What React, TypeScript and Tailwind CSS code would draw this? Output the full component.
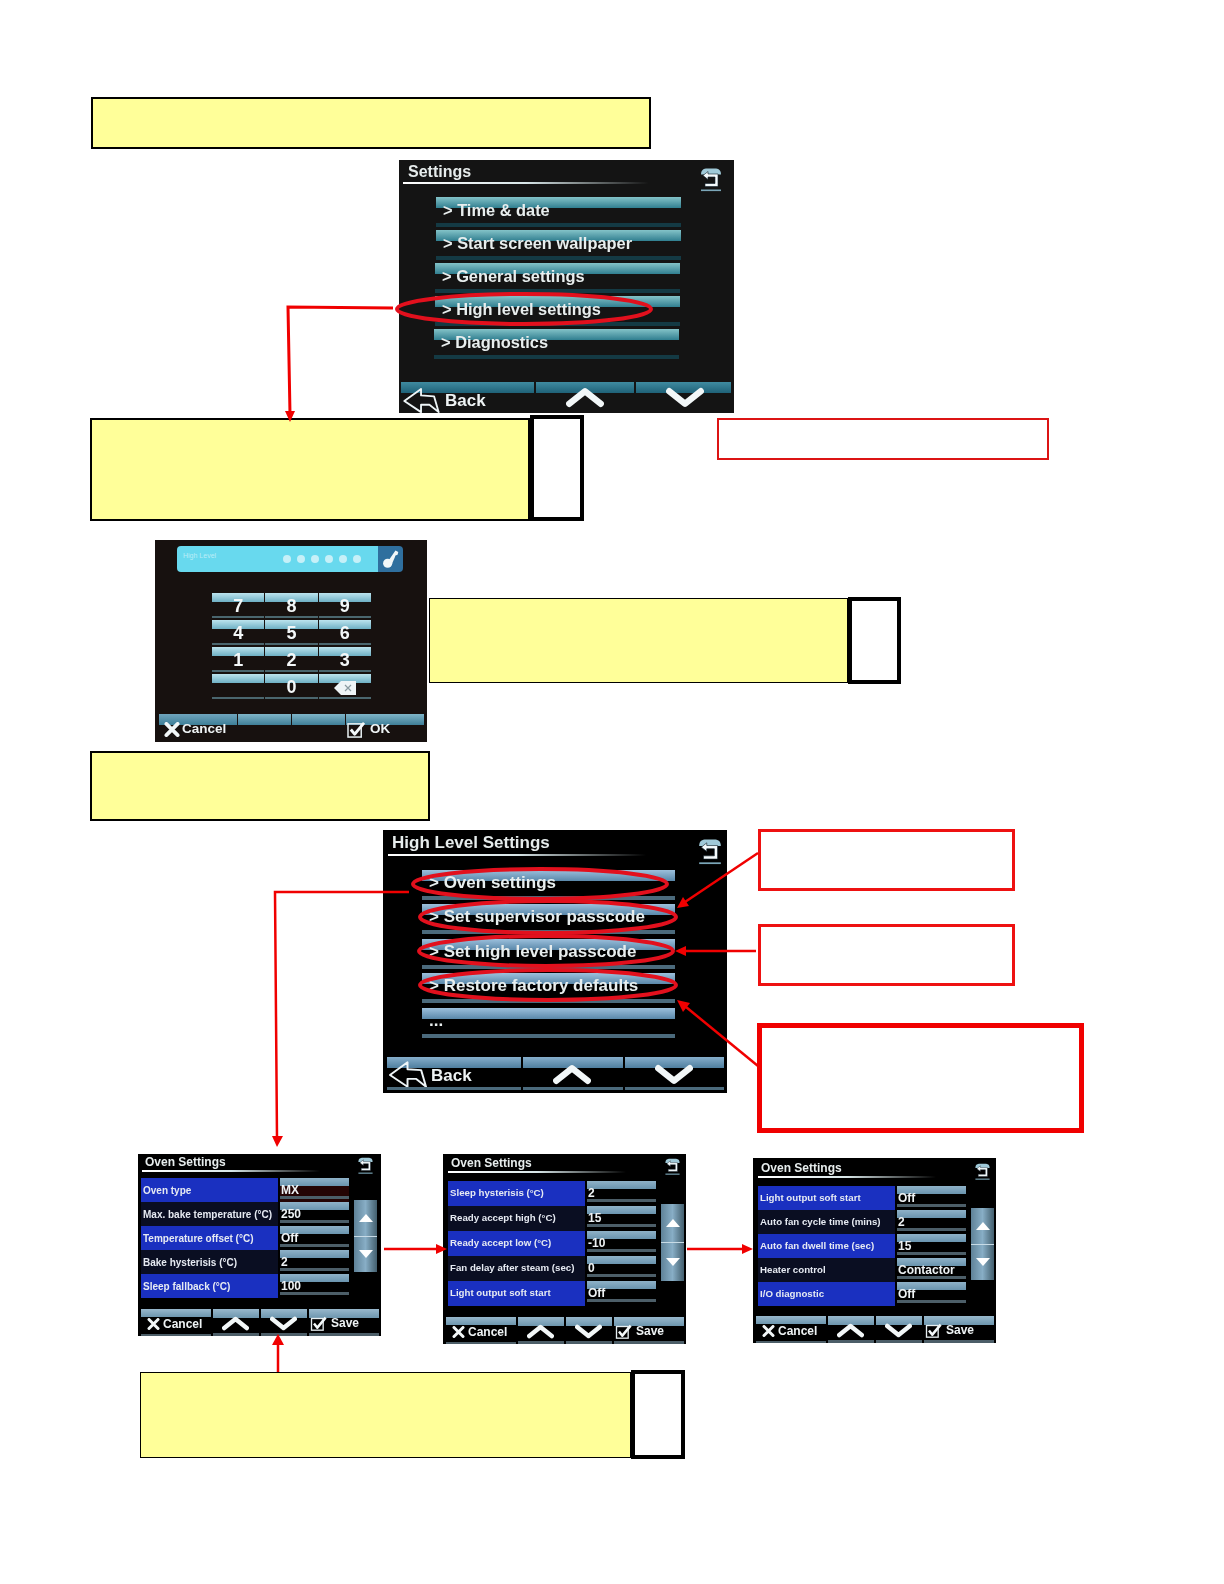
import type { ReactNode } from "react";

const RED = "#f00000";
const RING = "#e2101d";

function ReturnIcon({ className = "" }: { className?: string }) {
  return (
    <svg viewBox="0 0 24 24" className={className}>
      <path d="M2 7 C2 2 5 1 8 1 H16 C19 1 22 2 22 7 Z" fill="#9fc9d8" />
      <path d="M9 4 L4 8 L9 12 V9.5 H16 V16 H6 V19 H19 V6.5 H9 Z" fill="#f4fafc" stroke="#10202a" strokeWidth="0.6" />
      <rect x="2" y="22" width="20" height="1.6" fill="#7ba6b8" />
    </svg>
  );
}

function BackArrow({ className = "" }: { className?: string }) {
  return (
    <svg viewBox="-1 -1 39 28" className={className}>
      <path
        d="M0 13 L18 0 V7 L32 8 L37 25 L27 17 H18 V25 Z"
        fill="none"
        stroke="#eef5f7"
        strokeWidth="2"
        strokeLinejoin="round"
      />
    </svg>
  );
}

function Chevron({ down = false, className = "" }: { down?: boolean; className?: string }) {
  return (
    <svg viewBox="0 0 36 20" className={className}>
      <path
        d={down ? "M3 4 L18 16 L33 4" : "M3 16 L18 4 L33 16"}
        fill="none"
        stroke="#f2f7f8"
        strokeWidth="6"
        strokeLinecap="round"
        strokeLinejoin="round"
      />
    </svg>
  );
}

function CancelX({ className = "" }: { className?: string }) {
  return (
    <svg viewBox="0 0 16 16" className={className}>
      <path d="M2 2 L14 14 M14 2 L2 14" stroke="#f2f7f8" strokeWidth="4" strokeLinecap="round" />
    </svg>
  );
}

function CheckBox({ className = "" }: { className?: string }) {
  return (
    <svg viewBox="0 0 20 18" className={className}>
      <rect x="1" y="3" width="14" height="14" fill="none" stroke="#e6eef0" strokeWidth="1.6" />
      <path d="M4 9 L8 14 L18 2" fill="none" stroke="#f4f9fa" strokeWidth="3" strokeLinejoin="round" />
    </svg>
  );
}

function KeyIcon({ className = "" }: { className?: string }) {
  return (
    <svg viewBox="0 0 24 28" className={className}>
      <circle cx="8" cy="20" r="6.5" fill="#f2f7f8" />
      <path d="M10 15 L19 2 L23 4 L22 8 L19 9 L18 12 L14 21 Z" fill="#f2f7f8" />
    </svg>
  );
}

function Screen({ className, children }: { className: string; children: ReactNode }) {
  return (
    <div className={`shrink-0 overflow-hidden ${className}`}>
      <div className="flex h-full flex-col blur-[0.4px]">{children}</div>
    </div>
  );
}

function TitleRow({
  title,
  titleClass,
  lineClass,
  iconClass,
  boxClass,
}: {
  title: string;
  titleClass: string;
  lineClass: string;
  iconClass: string;
  boxClass: string;
}) {
  return (
    <div className={`flex shrink-0 items-start justify-between ${boxClass}`}>
      <div>
        <div className={`font-bold text-[#e6ecec] ${titleClass}`}>{title}</div>
        <div className={`h-[2px] bg-linear-to-r from-white via-[#d8e6e8] to-transparent ${lineClass}`} />
      </div>
      <ReturnIcon className={iconClass} />
    </div>
  );
}

type BarCellProps = { widthClass: string; strip: string; foot?: string; children: ReactNode };

function BarCell({ widthClass, strip, foot, children }: BarCellProps) {
  return (
    <div className={`flex shrink-0 flex-col ${widthClass}`}>
      <div className={`h-[11px] bg-linear-to-b ${strip}`} />
      <div className="-mt-[6px] flex h-[24px] items-center font-bold text-[#eef3f4]">{children}</div>
      {foot && <div className={`mt-[1px] h-[3px] ${foot}`} />}
    </div>
  );
}

function MenuRow({
  text,
  strip,
  foot,
  textClass,
  rowClass,
}: {
  text: string;
  strip: string;
  foot: string;
  textClass: string;
  rowClass: string;
}) {
  return (
    <div className={`flex shrink-0 flex-col ${rowClass}`}>
      <div className={`h-[11px] bg-linear-to-b ${strip}`} />
      <div className={`-mt-[8px] h-[20px] pl-[7px] leading-[20px] font-bold whitespace-nowrap text-[#e8eeee] ${textClass}`}>
        {text}
      </div>
      <div className={`mt-[3px] h-[4px] ${foot}`} />
    </div>
  );
}

function SettingsScreen() {
  const strip = "from-[#83c3c8] to-[#2f7f90]";
  const foot = "bg-[#143a44]";
  const rows = ["> Time & date", "> Start screen wallpaper", "> General settings", "> High level settings", "> Diagnostics"];
  const cell = "from-[#3f8ba0] to-[#1f6278]";
  return (
    <Screen className="h-[253px] w-[335px] bg-[#141414]">
      <TitleRow
        title="Settings"
        titleClass="text-[16px] leading-[20px] pl-[5px]"
        lineClass="w-[246px]"
        iconClass="mt-[5px] h-[25px] w-[24px]"
        boxClass="h-[37px] pl-[4px] pr-[11px] pt-[2px]"
      />
      {rows.map((r, i) => (
        <MenuRow
          key={r}
          text={r}
          strip={strip}
          foot={foot}
          textClass="text-[16.4px]"
          rowClass={`h-[33px] w-[245px] ${i < 2 ? "ml-[37px]" : i < 4 ? "ml-[36px]" : "ml-[35px]"}`}
        />
      ))}
      <div className="mt-auto flex h-[31px] gap-[2px] pl-[2px]">
        <BarCell widthClass="w-[133px]" strip={cell}>
          <BackArrow className="mt-[3px] ml-[2px] h-[26px] w-[37px]" />
          <span className="mt-[4px] ml-[5px] text-[17px]">Back</span>
        </BarCell>
        <BarCell widthClass="w-[98px] justify-start" strip={cell}>
          <Chevron className="-mt-[3px] ml-[30px] h-[21px] w-[38px]" />
        </BarCell>
        <BarCell widthClass="w-[95px]" strip={cell}>
          <Chevron down className="-mt-[4px] ml-[30px] h-[21px] w-[38px]" />
        </BarCell>
      </div>
    </Screen>
  );
}

function HighLevelScreen() {
  const strip = "from-[#9cc0dc] to-[#5a88aa]";
  const foot = "bg-[#4b6a7c]";
  const rows = ["> Oven settings", "> Set supervisor passcode", "> Set high level passcode", "> Restore factory defaults", "..."];
  const cell = "from-[#86aecb] to-[#4f7f9f]";
  return (
    <Screen className="h-[263px] w-[344px] bg-black">
      <TitleRow
        title="High Level Settings"
        titleClass="text-[17px] leading-[22px] pl-[4px]"
        lineClass="w-[258px]"
        iconClass="mt-[6px] h-[27px] w-[26px]"
        boxClass="h-[40px] pl-[5px] pr-[4px] pt-[2px]"
      />
      {rows.map((r) => (
        <MenuRow
          key={r}
          text={r}
          strip={strip}
          foot={foot}
          textClass="text-[17px]"
          rowClass="ml-[39px] h-[34.4px] w-[253px]"
        />
      ))}
      <div className="mt-auto flex h-[36px] gap-[2px] pl-[4px]">
        <BarCell widthClass="w-[134px]" strip={cell} foot={foot}>
          <BackArrow className="mt-[2px] ml-[2px] h-[28px] w-[38px]" />
          <span className="mt-[4px] ml-[4px] text-[17px]">Back</span>
        </BarCell>
        <BarCell widthClass="w-[100px]" strip={cell} foot={foot}>
          <Chevron className="mt-[1px] ml-[30px] h-[21px] w-[38px]" />
        </BarCell>
        <BarCell widthClass="w-[99px]" strip={cell} foot={foot}>
          <Chevron down className="mt-[1px] ml-[30px] h-[21px] w-[38px]" />
        </BarCell>
      </div>
    </Screen>
  );
}

function KeypadScreen() {
  const keys = ["7", "8", "9", "4", "5", "6", "1", "2", "3", "", "0", "del"];
  const cell = "from-[#7fb5c8] to-[#3f7f98]";
  return (
    <Screen className="h-[202px] w-[272px] bg-[#17110f]">
      <div className="mt-[6px] ml-[22px] flex h-[26px] w-[226px] shrink-0">
        <div className="flex w-[201px] items-center justify-between rounded-l-[4px] bg-[#68d9ee] pr-[17px] pl-[6px]">
          <span className="-mt-[5px] text-[7px] text-[#b9edf7]">High Level</span>
          <div className="flex gap-[6px]">
            {[0, 1, 2, 3, 4, 5].map((d) => (
              <div key={d} className="h-[8px] w-[8px] rounded-full bg-[#c6f0f8]" />
            ))}
          </div>
        </div>
        <div className="flex w-[25px] items-center justify-center rounded-r-[4px] bg-[#2f6f9e]">
          <KeyIcon className="h-[20px] w-[17px]" />
        </div>
      </div>
      <div className="mt-[21px] ml-[57px] grid w-[159px] shrink-0 grid-cols-3 gap-x-px">
        {keys.map((k, i) => (
          <div key={i} className="flex h-[27px] flex-col">
            <div className="h-[9px] bg-linear-to-b from-[#bce4ee] to-[#6eb0c4]" />
            <div className="-mt-[4px] flex h-[17px] items-center justify-center text-[18px] font-bold text-[#f3f7f8]">
              {k === "del" ? (
                <svg viewBox="0 0 22 14" className="mt-[1px] h-[14px] w-[22px]">
                  <path d="M0 7 L7 0 H22 V14 H7 Z" fill="#eef4f6" />
                  <path d="M11 4 L17 10 M17 4 L11 10" stroke="#8a9aa0" strokeWidth="1.2" />
                </svg>
              ) : (
                k
              )}
            </div>
            <div className="mt-[1px] h-[2px] bg-[#4a666e]" />
          </div>
        ))}
      </div>
      <div className="mt-auto flex h-[28px] gap-px pl-[4px]">
        <BarCell widthClass="w-[78px]" strip="from-[#6fa5bc] to-[#3d7f98]">
          <CancelX className="-mt-[1px] ml-[5px] h-[15px] w-[16px]" />
          <span className="-mt-[2px] ml-[2px] text-[13.5px]">Cancel</span>
        </BarCell>
        <BarCell widthClass="w-[53px]" strip={cell}>
          <span />
        </BarCell>
        <BarCell widthClass="w-[53px]" strip={cell}>
          <span />
        </BarCell>
        <BarCell widthClass="w-[78px]" strip={cell}>
          <CheckBox className="-mt-[1px] ml-[1px] h-[17px] w-[19px]" />
          <span className="-mt-[2px] ml-[4px] text-[13.5px]">OK</span>
        </BarCell>
      </div>
    </Screen>
  );
}

type OvenRow = { label: string; value: string };

function OvenScreen({
  rows,
  size,
  head,
  line,
  rowH,
  rowsClass,
  scrollClass,
  labelClass,
  hot,
}: {
  rows: OvenRow[];
  size: string;
  head: string;
  line: string;
  rowH: string;
  rowsClass: string;
  scrollClass: string;
  labelClass: string;
  hot?: boolean;
}) {
  const strip = "from-[#8fb2c8] to-[#6a94ae]";
  const foot = "bg-[#4c5e68]";
  return (
    <Screen className={`bg-black ${size}`}>
      <TitleRow
        title="Oven Settings"
        titleClass="text-[12px] leading-[15px] pl-[3px]"
        lineClass={line}
        iconClass="mt-[2px] h-[17px] w-[17px]"
        boxClass={head}
      />
      <div className={`flex ${rowsClass}`}>
        <div className="w-[208px] shrink-0">
          {rows.map((r, i) => (
            <div key={r.label} className={`flex ${rowH}`}>
              <div
                className={`flex w-[137px] shrink-0 items-center pl-[2px] font-bold whitespace-nowrap text-[#e6eaf2] ${labelClass} ${
                  i % 2 === 0 ? "bg-[#1a30c0]" : "bg-[#0a0e22]"
                }`}
              >
                {r.label}
              </div>
              <div className={`ml-[2px] flex w-[69px] flex-col ${hot && i === 0 ? "bg-[#240404]" : ""}`}>
                <div className={`h-[8px] bg-linear-to-b ${strip}`} />
                <div className="-mt-[2px] h-[12px] pl-[1px] text-[12px] leading-[12px] font-bold text-[#eef2f4]">
                  {r.value}
                </div>
                <div className={`h-[3px] ${foot}`} />
              </div>
            </div>
          ))}
        </div>
        <div className={`ml-[5px] flex w-[23px] shrink-0 flex-col bg-linear-to-r from-[#5f8298] via-[#88aec6] to-[#44606f] ${scrollClass}`}>
          <div className="flex flex-1 items-center justify-center border-b border-[#c8dbe6]">
            <div className="h-0 w-0 border-x-[7px] border-b-[8px] border-x-transparent border-b-white" />
          </div>
          <div className="flex flex-1 items-center justify-center">
            <div className="h-0 w-0 border-x-[7px] border-t-[8px] border-x-transparent border-t-white" />
          </div>
        </div>
      </div>
      <div className="mt-auto flex h-[27px] gap-[2px] pl-[3px]">
        <BarCell widthClass="w-[70px]" strip="from-[#98b8cc] to-[#6d96ae]" foot={foot}>
          <CancelX className="mt-[4px] ml-[6px] h-[12px] w-[13px]" />
          <span className="mt-[4px] ml-[3px] text-[12px]">Cancel</span>
        </BarCell>
        <BarCell widthClass="w-[46px]" strip="from-[#98b8cc] to-[#6d96ae]" foot={foot}>
          <Chevron className="mt-[3px] ml-[9px] h-[15px] w-[27px]" />
        </BarCell>
        <BarCell widthClass="w-[46px]" strip="from-[#98b8cc] to-[#6d96ae]" foot={foot}>
          <Chevron down className="mt-[3px] ml-[9px] h-[15px] w-[27px]" />
        </BarCell>
        <BarCell widthClass="w-[70px]" strip="from-[#98b8cc] to-[#6d96ae]" foot={foot}>
          <CheckBox className="mt-[3px] ml-[1px] h-[15px] w-[18px]" />
          <span className="mt-[2px] ml-[3px] text-[12px]">Save</span>
        </BarCell>
      </div>
    </Screen>
  );
}

function Arrows() {
  return (
    <svg viewBox="0 0 1224 1584" className="pointer-events-none absolute inset-0 h-[1584px] w-[1224px]">
      <g fill="none" stroke={RING}>
        <ellipse cx="524" cy="309" rx="127" ry="15" strokeWidth="4" />
        <ellipse cx="540" cy="884" rx="127" ry="15" strokeWidth="4" />
        <ellipse cx="548" cy="917" rx="128" ry="16" strokeWidth="4" />
        <ellipse cx="546" cy="951" rx="127" ry="15" strokeWidth="4" />
        <ellipse cx="548" cy="985" rx="128" ry="15" strokeWidth="4" />
      </g>
      <g fill="none" stroke={RED}>
        <path d="M393 308 L288 307 L290 414" strokeWidth="3" />
        <path d="M409 892 H275 L277 1138" strokeWidth="2.5" />
        <path d="M278 1372 V1342" strokeWidth="2.5" />
        <path d="M384 1249 H438" strokeWidth="2.5" />
        <path d="M687 1249 H744" strokeWidth="2.5" />
        <path d="M758 853 L685 902" strokeWidth="2.5" />
        <path d="M756 951 H686" strokeWidth="2.5" />
        <path d="M758 1066 L686 1007" strokeWidth="2.5" />
      </g>
      <g fill={RED}>
        <polygon points="285,411 295,411 290,422" />
        <polygon points="272,1136 283,1136 277,1147" />
        <polygon points="272,1345 284,1345 278,1334" />
        <polygon points="436,1244 436,1254 447,1249" />
        <polygon points="742,1244 742,1254 753,1249" />
        <polygon points="677,908 683,897 689,906" />
        <polygon points="675,951 686,946 686,956" />
        <polygon points="677,1000 690,1003 683,1012" />
      </g>
    </svg>
  );
}

const OVEN_A: OvenRow[] = [
  { label: "Oven type", value: "MX" },
  { label: "Max. bake temperature (°C)", value: "250" },
  { label: "Temperature offset (°C)", value: "Off" },
  { label: "Bake hysterisis (°C)", value: "2" },
  { label: "Sleep fallback (°C)", value: "100" },
];

const OVEN_B: OvenRow[] = [
  { label: "Sleep hysterisis (°C)", value: "2" },
  { label: "Ready accept high (°C)", value: "15" },
  { label: "Ready accept low (°C)", value: "-10" },
  { label: "Fan delay after steam (sec)", value: "0" },
  { label: "Light output soft start", value: "Off" },
];

const OVEN_C: OvenRow[] = [
  { label: "Light output soft start", value: "Off" },
  { label: "Auto fan cycle time (mins)", value: "2" },
  { label: "Auto fan dwell time (sec)", value: "15" },
  { label: "Heater control", value: "Contactor" },
  { label: "I/O diagnostic", value: "Off" },
];

export default function App() {
  const note = "shrink-0 border-2 border-black bg-[#ffff99]";
  const thinNote = "shrink-0 border border-black bg-[#ffff99]";
  const blank = "shrink-0 border-4 border-black bg-white";
  return (
    <div className="relative flex h-[1584px] w-[1224px] flex-col overflow-hidden bg-white font-['Liberation_Sans',Arial,sans-serif]">
      <div className={`mt-[97px] ml-[91px] h-[52px] w-[560px] ${note}`} />

      <div className="mt-[11px] ml-[399px]">
        <SettingsScreen />
      </div>

      <div className="mt-[2px] ml-[90px] flex items-start">
        <div className="flex items-end">
          <div className={`h-[103px] w-[440px] ${note}`} />
          <div className={`h-[106px] w-[54px] ${blank}`} />
        </div>
        <div className="mt-[3px] ml-[133px] h-[42px] w-[332px] border-2 border-[#dc1414] bg-white" />
      </div>

      <div className="mt-[19px] ml-[155px] flex items-start">
        <KeypadScreen />
        <div className="mt-[57px] ml-[2px] flex items-center">
          <div className={`h-[85px] w-[419px] ${thinNote}`} />
          <div className={`h-[87px] w-[53px] ${blank}`} />
        </div>
      </div>

      <div className={`mt-[9px] ml-[90px] h-[70px] w-[340px] ${note}`} />

      <div className="mt-[8px] ml-[383px] flex items-start">
        <div className="mt-px">
          <HighLevelScreen />
        </div>
        <div className="ml-[31px] flex flex-col items-start">
          <div className="h-[62px] w-[257px] border-[3px] border-[#ee1111] bg-white" />
          <div className="mt-[33px] h-[62px] w-[257px] border-[3px] border-[#ee1111] bg-white" />
          <div className="mt-[37px] -ml-px h-[110px] w-[327px] border-[5px] border-[#f00000] bg-white" />
        </div>
      </div>

      <div className="mt-[21px] ml-[138px] flex items-start">
        <OvenScreen
          rows={OVEN_A}
          size="h-[182px] w-[243px]"
          head="h-[24px] pl-[4px] pr-[7px] pt-[1px]"
          line="w-[178px]"
          rowH="h-[24px]"
          rowsClass="pl-[3px]"
          scrollClass="mt-[22px] h-[72px]"
          labelClass="text-[10px]"
          hot
        />
        <div className="ml-[62px]">
          <OvenScreen
            rows={OVEN_B}
            size="h-[190px] w-[243px]"
            head="h-[27px] pl-[5px] pr-[5px] pt-[2px]"
            line="w-[178px]"
            rowH="h-[25px]"
            rowsClass="pl-[5px]"
            scrollClass="mt-[23px] h-[77px]"
            labelClass="text-[9.7px]"
          />
        </div>
        <div className="mt-[4px] ml-[67px]">
          <OvenScreen
            rows={OVEN_C}
            size="h-[185px] w-[243px]"
            head="h-[28px] pl-[5px] pr-[5px] pt-[3px]"
            line="w-[178px]"
            rowH="h-[24px]"
            rowsClass="pl-[5px]"
            scrollClass="mt-[22px] h-[72px]"
            labelClass="text-[9.7px]"
          />
        </div>
      </div>

      <div className="mt-[26px] ml-[140px] flex items-center">
        <div className={`h-[86px] w-[491px] ${thinNote}`} />
        <div className={`h-[89px] w-[54px] ${blank}`} />
      </div>

      <Arrows />
    </div>
  );
}
